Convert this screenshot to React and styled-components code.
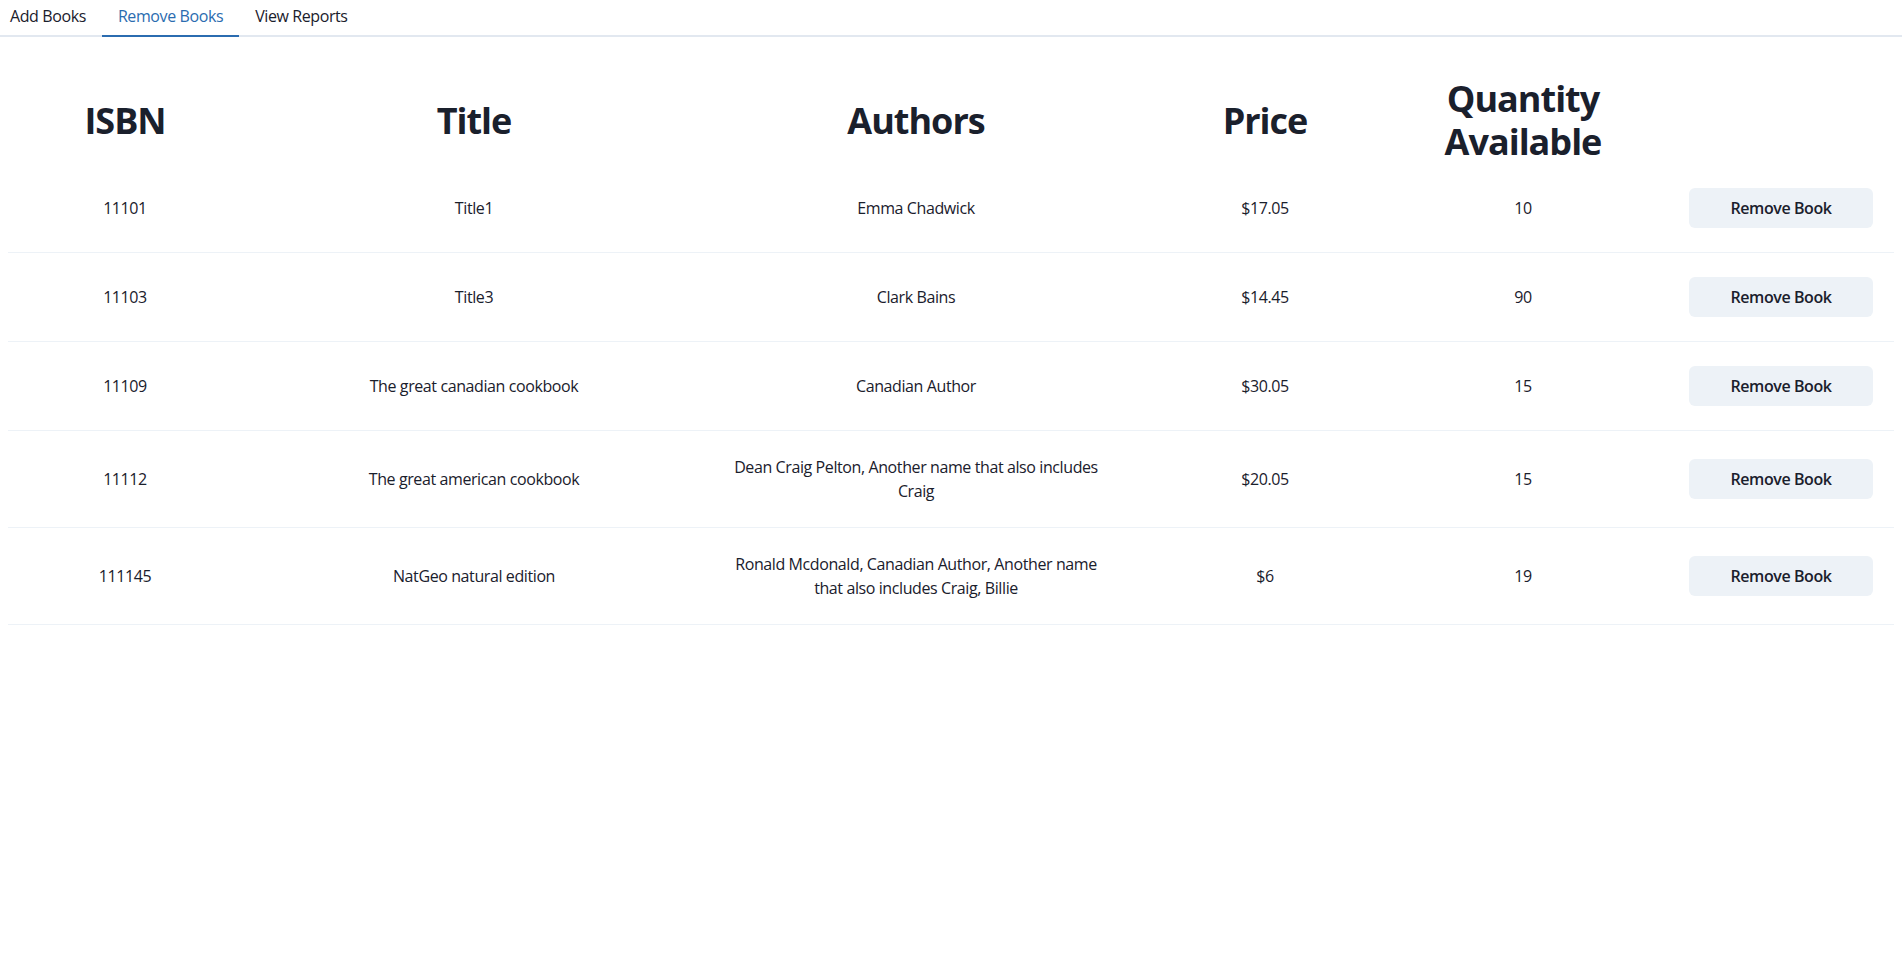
import React, { useState } from 'react'
import styled, { createGlobalStyle } from 'styled-components'

const GlobalStyle = createGlobalStyle`
  * { box-sizing: border-box; }
  body {
    margin: 0;
    background: #ffffff;
    color: #1a202c;
    font-family: "Open Sans", "Noto Sans", sans-serif;
    letter-spacing: -0.4px;
  }
`

const Page = styled.div`
  width: 100%;
  min-height: 100vh;
  background: #fff;
`

const TabList = styled.div`
  display: flex;
  border-bottom: 2px solid #e2e8f0;
  margin-left: -6px;
`

const Tab = styled.button`
  font-family: inherit;
  letter-spacing: inherit;
  font-size: 16px;
  line-height: 1.2;
  padding: 7px 16px 9px;
  background: none;
  border: none;
  border-bottom: 2px solid ${props => (props.active ? '#2b6cb0' : 'transparent')};
  margin-bottom: -2px;
  color: ${props => (props.active ? '#2b6cb0' : '#1a202c')};
  cursor: pointer;
`

const Panel = styled.div`
  padding: 14px 8px 0;
`

const Table = styled.table`
  width: 100%;
  border-collapse: collapse;
  table-layout: fixed;
`

const HeadCell = styled.th`
  padding: 26px 24px 0;
  font-size: 36px;
  font-weight: 700;
  line-height: 1.2;
  letter-spacing: -1px;
  text-align: center;
  vertical-align: middle;
  color: #1a202c;
`

const Row = styled.tr`
  border-bottom: 1px solid #edf2f7;
`

const Cell = styled.td`
  padding: ${props => (props.action ? '24px 21px 24px 24px' : '24px')};
  font-size: 16px;
  line-height: 1.5;
  text-align: ${props => (props.action ? 'right' : 'center')};
  vertical-align: middle;
  color: #1a202c;
`

const RemoveButton = styled.button`
  width: 184px;
  height: 40px;
  border: none;
  border-radius: 6px;
  background: #edf2f7;
  color: #1a202c;
  font-family: inherit;
  letter-spacing: inherit;
  font-size: 16px;
  font-weight: 600;
  cursor: pointer;
  vertical-align: middle;
  &:hover { background: #e2e8f0; }
`

const columns = [234, 464, 420, 278, 238, 252]

const books = [
  { isbn: '11101', title: 'Title1', authors: 'Emma Chadwick', price: '$17.05', qty: 10 },
  { isbn: '11103', title: 'Title3', authors: 'Clark Bains', price: '$14.45', qty: 90 },
  { isbn: '11109', title: 'The great canadian cookbook', authors: 'Canadian Author', price: '$30.05', qty: 15 },
  { isbn: '11112', title: 'The great american cookbook', authors: 'Dean Craig Pelton, Another name that also includes Craig', price: '$20.05', qty: 15 },
  { isbn: '111145', title: 'NatGeo natural edition', authors: 'Ronald Mcdonald, Canadian Author, Another name that also includes Craig, Billie', price: '$6', qty: 19 },
]

const tabs = ['Add Books', 'Remove Books', 'View Reports']

export default function App() {
  const [active, setActive] = useState(1)
  const [rows, setRows] = useState(books)

  return (
    <Page>
      <GlobalStyle />
      <TabList>
        {tabs.map((t, i) => (
          <Tab key={t} active={i === active} onClick={() => setActive(i)}>
            {t}
          </Tab>
        ))}
      </TabList>
      <Panel>
        <Table>
          <colgroup>
            {columns.map((w, i) => (
              <col key={i} style={{ width: w }} />
            ))}
          </colgroup>
          <thead>
            <tr>
              <HeadCell>ISBN</HeadCell>
              <HeadCell>Title</HeadCell>
              <HeadCell>Authors</HeadCell>
              <HeadCell>Price</HeadCell>
              <HeadCell>Quantity Available</HeadCell>
              <HeadCell />
            </tr>
          </thead>
          <tbody>
            {rows.map(b => (
              <Row key={b.isbn}>
                <Cell>{b.isbn}</Cell>
                <Cell>{b.title}</Cell>
                <Cell>{b.authors}</Cell>
                <Cell>{b.price}</Cell>
                <Cell>{b.qty}</Cell>
                <Cell action>
                  <RemoveButton onClick={() => setRows(rows.filter(r => r.isbn !== b.isbn))}>
                    Remove Book
                  </RemoveButton>
                </Cell>
              </Row>
            ))}
          </tbody>
        </Table>
      </Panel>
    </Page>
  )
}
